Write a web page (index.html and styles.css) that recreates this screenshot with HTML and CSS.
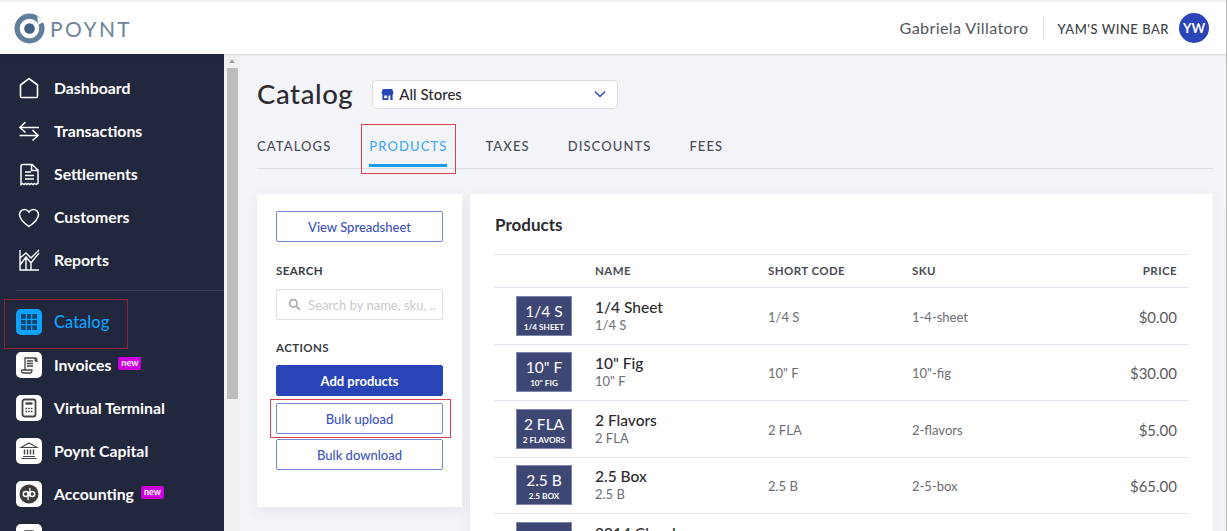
FILE: index.html
```html
<!DOCTYPE html>
<html lang="en">
<head>
  <meta charset="UTF-8">
  <title>Poynt Catalog</title>
  <link rel="stylesheet" href="styles.css">
</head>
<body>
  <!-- Header -->
  <header class="topbar">
    <div class="logo">
      <svg class="logo-mark" viewBox="0 0 32 32">
        <circle cx="16" cy="16" r="12.8" fill="none" stroke="#5f7f9c" stroke-width="5.400"/>
        <circle cx="16" cy="16" r="5.500" fill="#3d6285"/>
        <path d="M24 3l7 6-6 3z" fill="#fff"/>
      </svg>
      <span class="logo-text">POYNT</span>
    </div>
    <div class="account">
      <span class="user-name">Gabriela Villatoro</span>
      <span class="account-sep"></span>
      <span class="biz-name">YAM'S WINE BAR</span>
      <span class="avatar">YW</span>
    </div>
  </header>

  <div class="layout">
    <!-- Sidebar -->
    <nav class="sidebar">
      <a class="nav-item">
        <svg class="nav-icon" viewBox="0 0 26 26"><path d="M12 22.500H5.500a1 1 0 0 1-1-1V10L13 3.500l8.500 6.500v11.500a1 1 0 0 1-1 1H12" fill="none" stroke="#fff" stroke-width="1.600"/></svg>
        <span>Dashboard</span>
      </a>
      <a class="nav-item">
        <svg class="nav-icon" viewBox="0 0 26 26"><path d="M23 9.500H4M9.500 4l-5.500 5.500 5.500 5M3.500 17.500H22M16.500 12l5.500 5.500-5.500 5" fill="none" stroke="#fff" stroke-width="1.600"/></svg>
        <span>Transactions</span>
      </a>
      <a class="nav-item">
        <svg class="nav-icon" viewBox="0 0 26 26"><path d="M5 22.500V5a1.500 1.500 0 0 1 1.500-1.500H16l6 5.500v13.500l-2 1-1.500-1-1.500 1-1.500-1-1.500 1-1.500-1-1.500 1-1.500-1-1.500 1-1.500-1-1.500 1zM9 11h6M9 14.500h9M9 18h9M15.500 4v5.500H22" fill="none" stroke="#fff" stroke-width="1.500"/></svg>
        <span>Settlements</span>
      </a>
      <a class="nav-item">
        <svg class="nav-icon" viewBox="0 0 26 26"><path d="M13 22.500C8 19 3.500 15.500 3.500 10.500 3.500 7.500 6 5.500 8.500 5.500c2 0 3.500 1 4.500 2.500 1-1.500 2.500-2.500 4.500-2.500 2.500 0 5 2 5 5 0 5-4.500 8.500-9.500 12z" fill="none" stroke="#fff" stroke-width="1.500"/></svg>
        <span>Customers</span>
      </a>
      <a class="nav-item">
        <svg class="nav-icon" viewBox="0 0 26 26"><path d="M4 3v20h19M4 18l6-8 5 6 8-10M4 11l6-5 5 5 8-8M10 10v13M15 16v7" fill="none" stroke="#fff" stroke-width="1.400"/></svg>
        <span>Reports</span>
      </a>
      <div class="nav-divider"></div>
      <a class="nav-item active">
        <span class="tile tile-active">
          <svg viewBox="0 0 20 20"><path d="M2 2h16v16H2z" fill="#14466e"/><path d="M7.300 2v16M12.700 2v16M2 7.300h16M2 12.700h16" stroke="#0da2ff" stroke-width="1.200"/></svg>
        </span>
        <span>Catalog</span>
      </a>
      <a class="nav-item">
        <span class="tile">
          <svg viewBox="0 0 20 20"><path d="M6 15V3h10v3M16 3c1.500 0 2 1.500 2 3h-2M3 15h10c0 2-1 3-2 3H4c-1 0-2-1-1-3zM8 6h6M8 8.500h6M8 11h6" fill="none" stroke="#444" stroke-width="1.300"/></svg>
        </span>
        <span>Invoices</span>
        <span class="new-badge">new</span>
      </a>
      <a class="nav-item">
        <span class="tile">
          <svg viewBox="0 0 20 20"><rect x="3.500" y="1.500" width="13" height="17" rx="2" fill="none" stroke="#444" stroke-width="1.800"/><path d="M6.500 5.500h7" stroke="#444" stroke-width="2.400"/><path d="M6.500 10.500h1.600M9.200 10.500h1.600M11.900 10.500h1.600M6.500 13.500h1.600M9.200 13.500h1.600M11.900 13.500h1.600" stroke="#444" stroke-width="1.500"/></svg>
        </span>
        <span>Virtual Terminal</span>
      </a>
      <a class="nav-item">
        <span class="tile">
          <svg viewBox="0 0 20 20"><path d="M10 2l8 4.500H2zM2.500 17.500h15M4 15.500h12" fill="none" stroke="#444" stroke-width="1.200"/><path d="M5.500 8.500v5M8.500 8.500v5M11.500 8.500v5M14.500 8.500v5" stroke="#444" stroke-width="1.400"/></svg>
        </span>
        <span>Poynt Capital</span>
      </a>
      <a class="nav-item">
        <span class="tile">
          <svg viewBox="0 0 20 20"><circle cx="10" cy="10" r="9.500" fill="#3c3c3c"/><circle cx="6.800" cy="10" r="2.500" fill="none" stroke="#fff" stroke-width="1.400"/><circle cx="13.200" cy="10" r="2.500" fill="none" stroke="#fff" stroke-width="1.400"/><path d="M9.100 7.500v8.500M10.900 4v8.500" stroke="#fff" stroke-width="1.300"/></svg>
        </span>
        <span>Accounting</span>
        <span class="new-badge">new</span>
      </a>
      <a class="nav-item">
        <span class="tile">
          <svg viewBox="0 0 20 20"><path d="M6 7V4h8v3" fill="none" stroke="#444" stroke-width="1.500"/></svg>
        </span>
      </a>
    </nav>

    <div class="scrollbar">
      <span class="scroll-arrow"></span>
      <div class="scroll-thumb"></div>
    </div>

    <!-- Main -->
    <main class="content">
      <div class="title-row">
        <h1>Catalog</h1>
        <div class="store-select">
          <svg class="store-icon" viewBox="0 0 14 14"><path d="M2 1h10l1.500 4.500a1.800 1.800 0 0 1-1 1.500V13h-11V7a1.800 1.800 0 0 1-1-1.500z" fill="#2945b7"/><path d="M3.500 8h3v3h-3zM8 8h2v5H8z" fill="#fff"/></svg>
          <span class="store-label">All Stores</span>
          <svg class="chevron" viewBox="0 0 12 8"><path d="M1 1.500l5 5 5-5" fill="none" stroke="#2945b7" stroke-width="1.400"/></svg>
        </div>
      </div>

      <div class="tabs">
        <a class="tab">CATALOGS</a>
        <a class="tab tab-active">PRODUCTS</a>
        <a class="tab">TAXES</a>
        <a class="tab">DISCOUNTS</a>
        <a class="tab">FEES</a>
      </div>

      <div class="columns">
        <aside class="card side-card">
          <button class="btn" type="button">View Spreadsheet</button>
          <div class="side-label label-search">SEARCH</div>
          <div class="search-box">
            <svg viewBox="0 0 14 14"><circle cx="5.700" cy="5.700" r="4" fill="none" stroke="#aaa" stroke-width="1.800"/><path d="M8.800 8.800l4 4" stroke="#aaa" stroke-width="2"/></svg>
            <span>Search by name, sku, ..</span>
          </div>
          <div class="side-label label-actions">ACTIONS</div>
          <div class="btn-stack">
            <button class="btn btn-primary" type="button">Add products</button>
            <button class="btn" type="button">Bulk upload</button>
            <button class="btn" type="button">Bulk download</button>
          </div>
        </aside>

        <section class="card products-card">
          <h2>Products</h2>
          <div class="row head-row">
            <span></span>
            <span>NAME</span>
            <span>SHORT CODE</span>
            <span>SKU</span>
            <span class="price-head">PRICE</span>
          </div>
          <div class="row">
            <div class="thumb"><strong>1/4 S</strong><small>1/4 SHEET</small></div>
            <div class="name"><b>1/4 Sheet</b><span>1/4 S</span></div>
            <span class="cell">1/4 S</span>
            <span class="cell">1-4-sheet</span>
            <span class="price">$0.00</span>
          </div>
          <div class="row">
            <div class="thumb"><strong>10" F</strong><small>10" FIG</small></div>
            <div class="name"><b>10" Fig</b><span>10" F</span></div>
            <span class="cell">10" F</span>
            <span class="cell">10"-fig</span>
            <span class="price">$30.00</span>
          </div>
          <div class="row">
            <div class="thumb"><strong>2 FLA</strong><small>2 FLAVORS</small></div>
            <div class="name"><b>2 Flavors</b><span>2 FLA</span></div>
            <span class="cell">2 FLA</span>
            <span class="cell">2-flavors</span>
            <span class="price">$5.00</span>
          </div>
          <div class="row">
            <div class="thumb"><strong>2.5 B</strong><small>2.5 BOX</small></div>
            <div class="name"><b>2.5 Box</b><span>2.5 B</span></div>
            <span class="cell">2.5 B</span>
            <span class="cell">2-5-box</span>
            <span class="price">$65.00</span>
          </div>
          <div class="row">
            <div class="thumb"><strong>2014</strong><small>2014</small></div>
            <div class="name"><b>2014 Chardonnay</b><span>2014</span></div>
          </div>
        </section>
      </div>
    </main>
  </div>

  <!-- Red annotation boxes -->
  <div class="mark mark-catalog"></div>
  <div class="mark mark-products"></div>
  <div class="mark mark-upload"></div>
</body>
</html>
```

FILE: styles.css
```css
/* Reset and base styles */
* {
  margin: 0;
  padding: 0;
  box-sizing: border-box;
}

html, body {
  height: 531px;
  overflow: hidden;
}

html {
  background: #fff;
}

body {
  position: relative;
  width: 1227px;
  display: flex;
  flex-direction: column;
  padding-top: 2px;
  border-right: 1px solid #bdbdbd;
  font-family: Lato, "Open Sans", sans-serif;
  color: #2b2b30;
  background: #f1f1f2;
}

/* Header */
.topbar {
  position: relative;
  flex: none;
  height: 52px;
  display: flex;
  align-items: center;
  justify-content: space-between;
  padding: 0 17px 0 14px;
  background: #fff;
  box-shadow: 0 1px 2px rgba(0, 0, 0, 0.12);
}

.logo {
  display: flex;
  align-items: center;
  gap: 5px;
}

.logo-mark {
  width: 31px;
  height: 31px;
}

.logo-text {
  font-size: 21px;
  letter-spacing: 2.4px;
  color: #6d8499;
}

.account {
  display: flex;
  align-items: center;
}

.user-name {
  margin-top: -2px;
  font-size: 16.200px;
  color: #55585c;
  letter-spacing: 0.35px;
}

.account-sep {
  width: 1px;
  height: 22px;
  margin: 0 14px;
  background: #d8dde0;
}

.biz-name {
  margin-top: 2px;
  font-size: 13px;
  font-weight: 500;
  letter-spacing: 0.5px;
  color: #3d3f44;
}

.avatar {
  width: 30px;
  height: 30px;
  margin-left: 10px;
  display: flex;
  align-items: center;
  justify-content: center;
  border-radius: 50%;
  background: #2945b7;
  color: #fff;
  font-size: 13px;
  font-weight: 700;
}

.layout {
  flex: 1;
  display: flex;
  min-height: 0;
}

/* Sidebar */
.sidebar {
  flex: none;
  width: 224px;
  padding: 12px 0 0 16px;
  background: #21273d;
  overflow: hidden;
}

.nav-item {
  height: 43px;
  display: flex;
  align-items: center;
  gap: 12px;
  color: #fff;
  font-size: 15.800px;
  font-weight: 700;
}

.nav-item.active {
  color: #0da2ff;
  font-size: 16.500px;
  font-weight: 500;
}

.nav-icon {
  flex: none;
  width: 26px;
  height: 26px;
}

.nav-divider {
  height: 1px;
  margin: 9px 0;
  background: #3a4056;
}

.tile {
  flex: none;
  width: 26px;
  height: 26px;
  display: flex;
  align-items: center;
  justify-content: center;
  border-radius: 5px;
  background: #fff;
}

.tile svg {
  width: 20px;
  height: 20px;
}

.tile-active {
  background: #0da2ff;
}

.new-badge {
  margin: -3px 0 0 -5px;
  padding: 0 3px;
  height: 13px;
  line-height: 12px;
  border-radius: 2px;
  background: #cc00dd;
  font-size: 9px;
  font-weight: 700;
}

/* Fake scrollbar */
.scrollbar {
  flex: none;
  width: 16px;
  display: flex;
  flex-direction: column;
  align-items: center;
  padding-top: 5px;
  background: #f1f1f1;
}

.scroll-arrow {
  width: 0;
  height: 0;
  border: 3px solid transparent;
  border-top: 0;
  border-bottom: 4px solid #a3a3a3;
}

.scroll-thumb {
  width: 11px;
  height: 331px;
  margin-top: 5px;
  background: #bdbdbd;
}

/* Main */
.content {
  flex: 1;
  min-width: 0;
  padding: 25px 13px 0 17px;
  background: #f3f4f8;
}

.title-row {
  display: flex;
  align-items: center;
  height: 29px;
  gap: 19px;
}

h1 {
  font-size: 27.500px;
  font-weight: 500;
  letter-spacing: 0.6px;
  color: #2b2b30;
}

.store-select {
  width: 246px;
  height: 29px;
  margin-top: 1px;
  display: flex;
  align-items: center;
  padding: 0 11px 0 8px;
  background: #fff;
  border: 1px solid #dcdee5;
  border-radius: 5px;
  font-size: 15px;
  font-weight: 500;
}

.store-icon {
  width: 13px;
  height: 13px;
  margin-right: 5px;
}

.store-label {
  flex: 1;
  margin-top: -1px;
}

.chevron {
  width: 12px;
  height: 8px;
}

/* Tabs */
.tabs {
  display: flex;
  gap: 38px;
  height: 48px;
  margin-top: 13px;
  border-bottom: 1px solid #dcdde2;
}

.tab {
  height: 46px;
  padding-top: 17px;
  font-size: 13px;
  font-weight: 500;
  letter-spacing: 1.1px;
  color: #4a4c55;
}

.tab-active {
  color: #4ba8f5;
  border-bottom: 3px solid #1a9df7;
}

/* Cards */
.columns {
  display: flex;
  gap: 8px;
  margin-top: 25px;
}

.card {
  background: #fff;
  box-shadow: 0 4px 14px rgba(40, 50, 90, 0.07);
}

.side-card {
  flex: none;
  width: 205px;
  height: 313px;
  padding: 17px 19px 0;
}

.btn {
  display: block;
  width: 100%;
  height: 31px;
  background: #fff;
  border: 1px solid #6e86dc;
  border-radius: 2px;
  font-family: inherit;
  font-size: 13px;
  font-weight: 500;
  color: #3e55c0;
}

.btn-primary {
  margin-bottom: 2px;
  background: #2945b7;
  border-color: #2945b7;
  font-weight: 700;
  color: #fff;
}

.btn-stack {
  display: flex;
  flex-direction: column;
  gap: 5px;
}

.side-label {
  font-size: 11.500px;
  font-weight: 700;
  letter-spacing: 0.4px;
  color: #3a3c44;
}

.label-search {
  margin-top: 22px;
  margin-bottom: 12px;
}

.label-actions {
  margin-top: 21px;
  margin-bottom: 11px;
}

.search-box {
  height: 31px;
  display: flex;
  align-items: center;
  gap: 7px;
  padding-left: 11px;
  border: 1px solid #e1e1e3;
  border-radius: 2px;
  font-size: 13px;
  color: #c8c9cc;
  white-space: nowrap;
  overflow: hidden;
}

.search-box svg {
  flex: none;
  width: 13px;
  height: 13px;
}

.products-card {
  flex: 1;
  min-width: 0;
  height: 400px;
  padding: 0 24px;
}

h2 {
  height: 60px;
  padding: 20px 1px 0;
  font-size: 17px;
  font-weight: 700;
  color: #2b2b30;
}

/* Product rows */
.row {
  display: grid;
  grid-template-columns: 101px 173px 144px 1fr 78px;
  align-items: center;
  height: 56.500px;
  padding-top: 2px;
  border-top: 1px solid #e6e7ee;
}

.head-row {
  height: 33px;
  padding: 0 0 1px;
  font-size: 11.500px;
  font-weight: 700;
  letter-spacing: 0.4px;
  color: #4a4c55;
}

.price-head {
  text-align: right;
  padding-right: 12px;
}

.thumb {
  width: 56px;
  height: 40px;
  margin-left: 22px;
  margin-top: -2px;
  padding-top: 2px;
  display: flex;
  flex-direction: column;
  align-items: center;
  justify-content: center;
  background: #3e4673;
  border: 1px solid #8087ad;
  color: #fff;
}

.thumb strong {
  font-size: 15.500px;
  font-weight: 400;
  line-height: 21px;
}

.thumb small {
  font-size: 8.200px;
  font-weight: 700;
  line-height: 11px;
}

.name {
  display: flex;
  flex-direction: column;
  margin-top: -3px;
}

.name b {
  font-size: 15.500px;
  font-weight: 500;
  line-height: 20px;
}

.name span {
  font-size: 13px;
  color: #6c6d72;
  line-height: 17px;
}

.cell {
  font-size: 13px;
  color: #6c6d72;
}

.price {
  text-align: right;
  padding-right: 12px;
  font-size: 15px;
  color: #5c5d60;
}

/* Red annotation boxes */
.mark {
  position: absolute;
  border: 1px solid #d9404d;
  pointer-events: none;
}

.mark-catalog {
  left: 4px;
  top: 299px;
  width: 124px;
  height: 50px;
  border-color: #8d2433;
}

.mark-products {
  left: 361px;
  top: 124px;
  width: 95px;
  height: 50px;
}

.mark-upload {
  left: 270px;
  top: 399px;
  width: 181px;
  height: 39px;
}
```
